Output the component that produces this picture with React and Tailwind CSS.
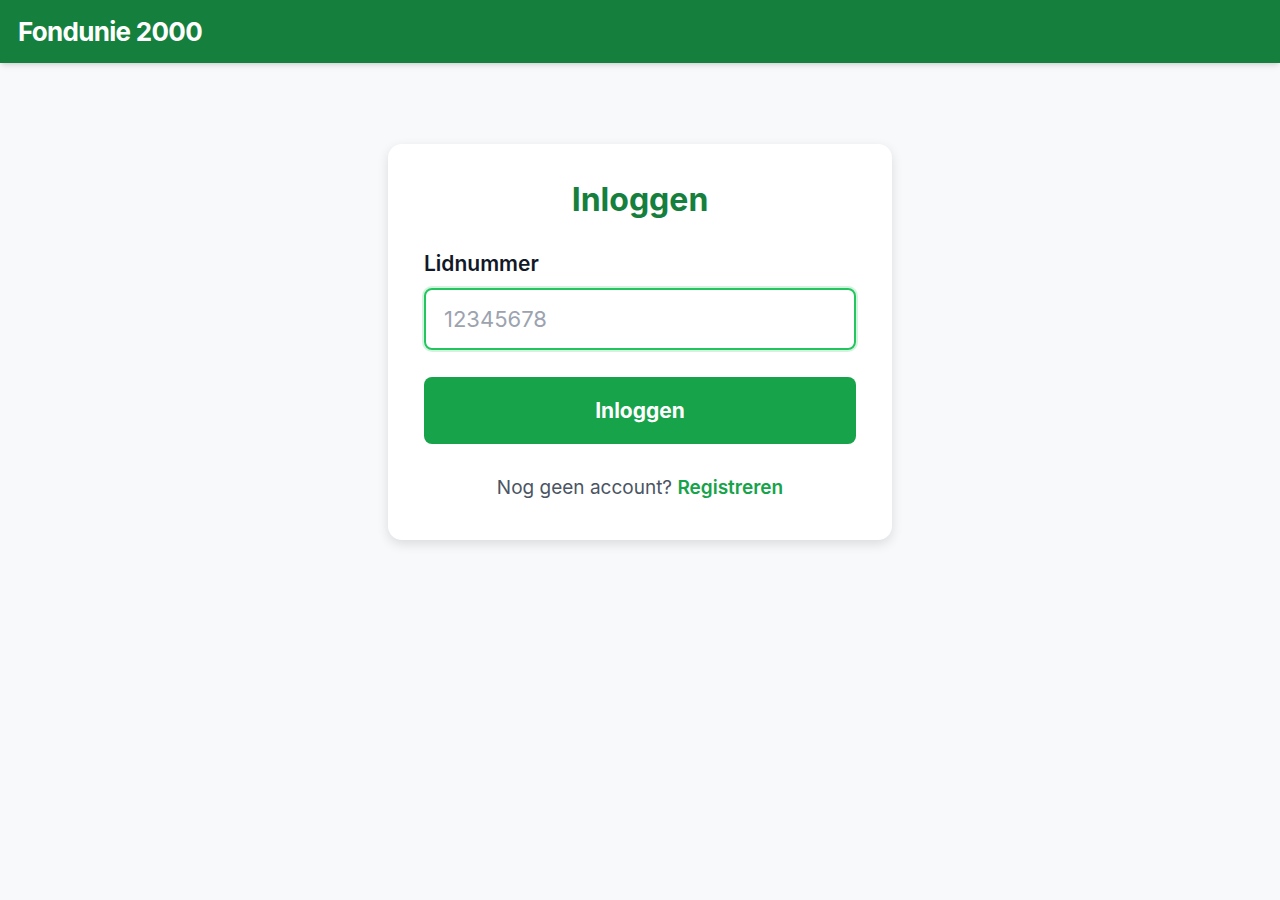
export default function App() {
  return (
    <div className="min-h-[900px] bg-[#f8f9fb] font-['Inter',sans-serif]">
      <header className="h-[63px] bg-[#15803d] flex items-center px-[18px] shadow-md">
        <h1 className="text-white text-[26px] font-bold tracking-[-0.7px]">Fondunie 2000</h1>
      </header>
      <main className="flex justify-center pt-[81px]">
        <div className="w-[504px] bg-white rounded-[14px] shadow-[0_4px_12px_rgba(0,0,0,0.12)] px-9 pt-9 pb-[38px]">
          <h2 className="text-center text-[32px] leading-[40px] font-bold text-[#15803d] mb-[30px]">Inloggen</h2>
          <label className="block text-[21px] leading-[28px] font-semibold text-[#111827] mb-[10px]">Lidnummer</label>
          <input
            type="text"
            placeholder="12345678"
            className="w-full h-[62px] rounded-lg border-2 border-[#22c55e] ring-2 ring-[#22c55e]/20 px-[18px] text-[22px] text-gray-800 placeholder:text-[#9ca3af] outline-none"
          />
          <button className="mt-[27px] w-full h-[67px] rounded-lg bg-[#16a34a] text-white text-[21px] font-bold">Inloggen</button>
          <p className="mt-[30px] text-center text-[19px] leading-[28px] text-[#4b5563]">
            Nog geen account? <a className="text-[#16a34a] font-semibold">Registreren</a>
          </p>
        </div>
      </main>
    </div>
  );
}
